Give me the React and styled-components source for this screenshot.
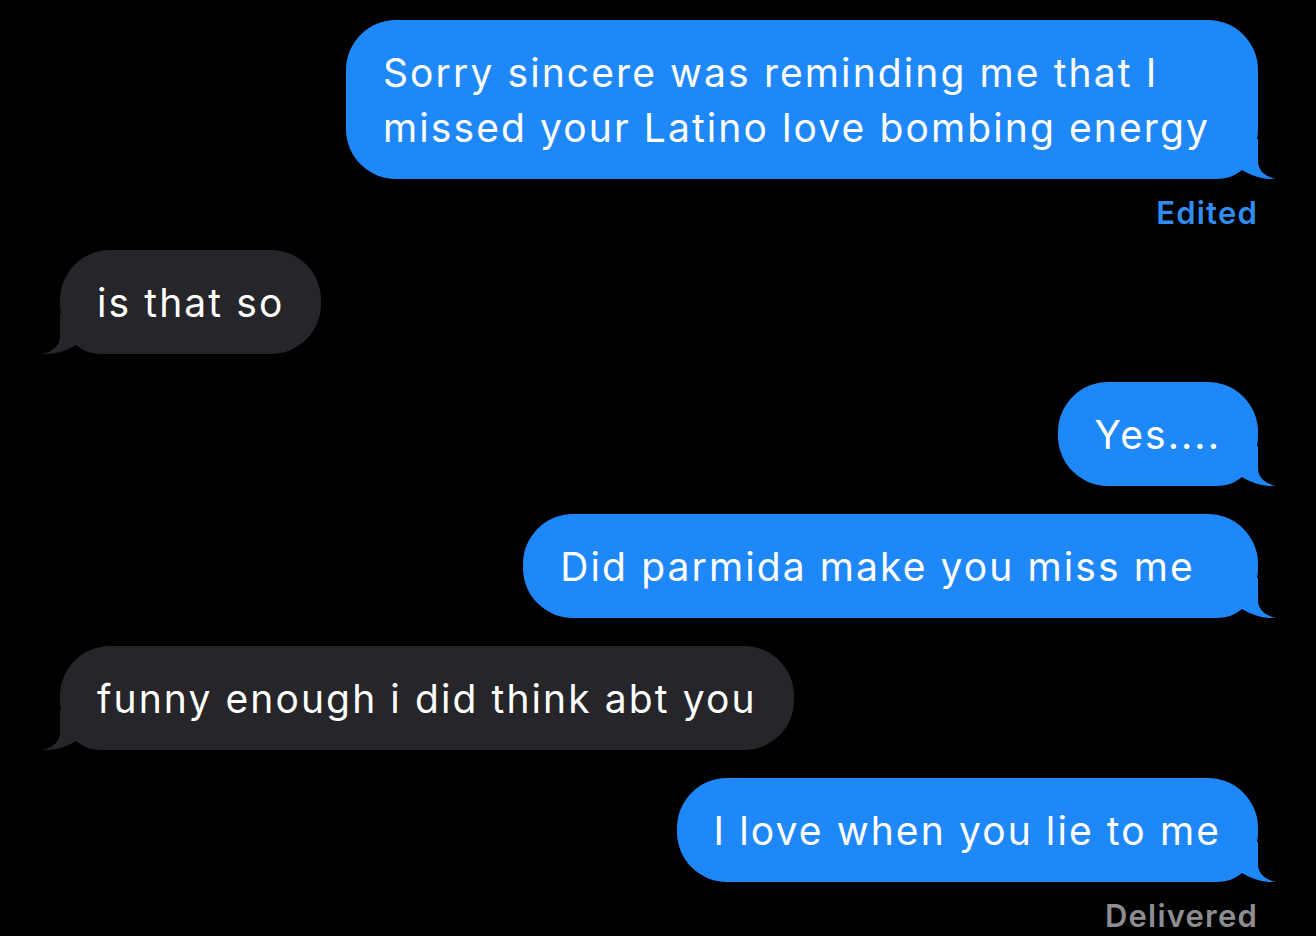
import React from "react";
import styled, { createGlobalStyle } from "styled-components";

const GlobalStyle = createGlobalStyle`
  html, body {
    margin: 0;
    padding: 0;
    background: #000;
  }
  body {
    font-family: Inter, "Noto Sans", "Liberation Sans", sans-serif;
    -webkit-font-smoothing: antialiased;
  }
`;

const COLORS = {
  me: "#1f88f9",
  them: "#262529",
};

const Screen = styled.div`
  width: 1316px;
  height: 936px;
  overflow: hidden;
  background: #000;
`;

const Thread = styled.div`
  display: flex;
  flex-direction: column;
  padding: 20px 58px 0 60px;
`;

const Row = styled.div`
  display: flex;
  justify-content: ${(p) => (p.$me ? "flex-end" : "flex-start")};
  margin-top: ${(p) => p.$top}px;
`;

const Bubble = styled.div`
  position: relative;
  max-width: 912px;
  ${(p) => p.$multi && "width: 912px;"}
  box-sizing: border-box;
  padding: 24.5px 37px;
  border-radius: 50px;
  background: ${(p) => (p.$me ? COLORS.me : COLORS.them)};
  color: #fff;
  font-size: 39px;
  line-height: 55px;
  font-weight: 400;
  letter-spacing: 2.1px;
  white-space: pre;
`;

const Text = styled.span`
  position: relative;
  z-index: 1;
`;

const Tail = styled.svg`
  position: absolute;
  bottom: 0;
  width: 70px;
  height: 40px;
  z-index: 0;
  ${(p) =>
    p.$me
      ? "right: -20px;"
      : "left: -20px; transform: scaleX(-1);"}
`;

const Meta = styled.div`
  text-align: right;
  margin-top: 16px;
  font-size: 31px;
  line-height: 36px;
  font-weight: 600;
  letter-spacing: 1.2px;
  color: ${(p) => (p.$tone === "blue" ? "#2f8cf3" : "#8d8d92")};
`;

// Curled corner of a bubble; drawn for the right-hand side and mirrored for the left.
function BubbleTail({ me, color }) {
  return (
    <Tail $me={me} viewBox="0 0 70 40" aria-hidden="true">
      <path
        d="M50 0 L50 22 C50 31 56 37 67.5 40 C57 40.5 45 38 34 31 C28 36 20 40 8 40 L0 40 L0 0 Z"
        fill={color}
      />
    </Tail>
  );
}

function Message({ me, multi, top, children }) {
  return (
    <Row $me={me} $top={top}>
      <Bubble $me={me} $multi={multi}>
        <Text>{children}</Text>
        <BubbleTail me={me} color={me ? COLORS.me : COLORS.them} />
      </Bubble>
    </Row>
  );
}

export default function App() {
  return (
    <Screen>
      <GlobalStyle />
      <Thread>
        <Message me multi top={0}>
          Sorry sincere was reminding me that I
          <br />
          missed your Latino love bombing energy
        </Message>
        <Meta $tone="blue">Edited</Meta>
        <Message top={19}>is that so</Message>
        <Message me top={28}>
          Yes....
        </Message>
        <Message me top={28}>
          {"Did parmida make you miss me  "}
        </Message>
        <Message top={28}>funny enough i did think abt you</Message>
        <Message me top={28}>
          I love when you lie to me
        </Message>
        <Meta $tone="gray">Delivered</Meta>
      </Thread>
    </Screen>
  );
}
